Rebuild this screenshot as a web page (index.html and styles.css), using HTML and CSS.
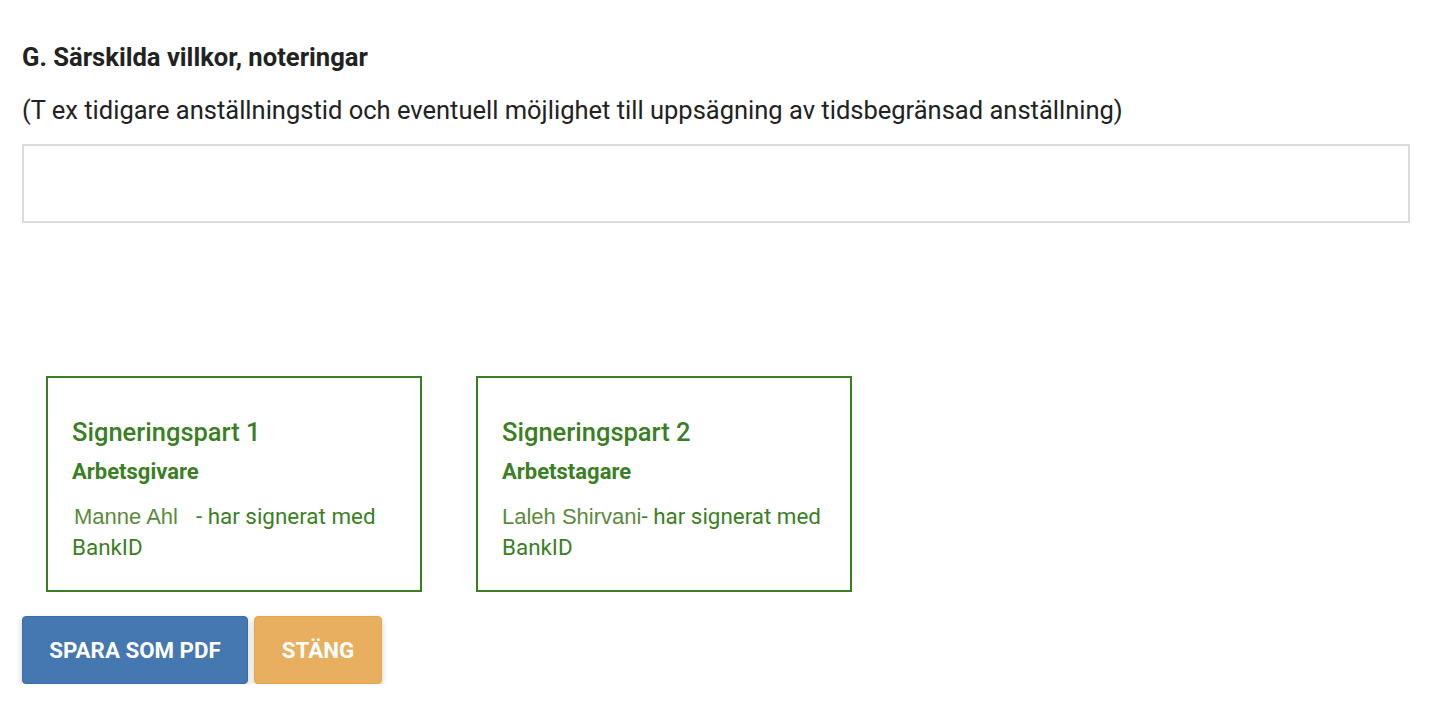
FILE: index.html
```html
<!DOCTYPE html>
<html lang="sv">
<head>
<meta charset="utf-8">
<link rel="stylesheet" href="styles.css">
</head>
<body>
<main class="page">
  <h2 class="section-title">G. Särskilda villkor, noteringar</h2>
  <p class="section-hint">(T ex tidigare anställningstid och eventuell möjlighet till uppsägning av tidsbegränsad anställning)</p>
  <div class="notes-box"></div>

  <div class="signers">
    <div class="signer-card">
      <h3 class="signer-title">Signeringspart 1</h3>
      <div class="signer-role">Arbetsgivare</div>
      <div class="signer-status"><span class="signer-name signer-name-gap">Manne Ahl</span><span>- har signerat med</span> <span>BankID</span></div>
    </div>
    <div class="signer-card">
      <h3 class="signer-title">Signeringspart 2</h3>
      <div class="signer-role">Arbetstagare</div>
      <div class="signer-status"><span class="signer-name">Laleh Shirvani</span><span>- har signerat med</span> <span>BankID</span></div>
    </div>
  </div>

  <div class="actions">
    <button class="btn btn-primary">SPARA SOM PDF</button>
    <button class="btn btn-warning">STÄNG</button>
  </div>
</main>
</body>
</html>
```

FILE: styles.css
```css
* { box-sizing: border-box; }
html, body { margin: 0; padding: 0; background: #fff; }
body {
  font-family: Roboto, "Liberation Sans", Arial, sans-serif;
  color: #222;
}
.page {
  padding: 42px 20px 0 22px;
}
.section-title {
  margin: 0;
  font-size: 25.6px;
  font-weight: 700;
  line-height: 30px;
  color: #222;
}
.section-hint {
  margin: 23px 0 0;
  font-size: 25.5px;
  line-height: 30px;
  color: #222;
}
.notes-box {
  margin-top: 19px;
  height: 79px;
  border: 2px solid #dcdcdc;
}
.signers {
  display: flex;
  gap: 54px;
  margin: 153px 0 0 24px;
}
.signer-card {
  width: 376px;
  height: 216px;
  border: 2px solid #3b7f25;
  padding: 38px 20px 0 24px;
  color: #3b7f25;
}
.signer-title {
  margin: 0;
  font-size: 25.5px;
  font-weight: 500;
  line-height: 32px;
}
.signer-role {
  margin-top: 10px;
  font-size: 22px;
  font-weight: 700;
  line-height: 28px;
}
.signer-status {
  margin-top: 15px;
  font-size: 22.4px;
  line-height: 31px;
}
.signer-name {
  display: inline-block;
  font-family: "Liberation Sans", Arial, sans-serif;
  font-size: 22px;
  line-height: 31px;
  color: #5b8a3c;
  vertical-align: top;
}
.signer-name-gap {
  padding: 0 18px 0 2px;
}
.actions {
  display: flex;
  gap: 6px;
  margin-top: 24px;
}
.btn {
  height: 68px;
  border: 1px solid transparent;
  border-radius: 4px;
  font-family: Roboto, "Liberation Sans", Arial, sans-serif;
  font-size: 22.3px;
  font-weight: 700;
  color: #fff;
  box-shadow: 0 3px 6px rgba(0,0,0,0.2);
  cursor: pointer;
}
.btn-primary {
  width: 226px;
  background: #4577b1;
  border-color: #3d6ba3;
}
.btn-warning {
  width: 128px;
  background: #e8b05e;
  border-color: #e2a850;
}
```
